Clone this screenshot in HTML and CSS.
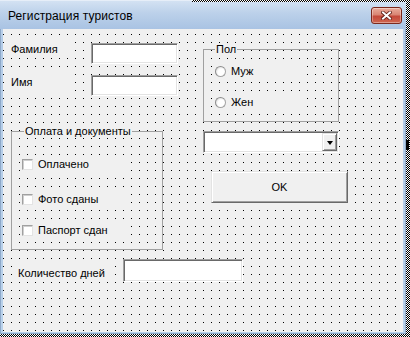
FILE: index.html
```html
<!doctype html>
<html lang="ru">
<head>
<meta charset="UTF-8">
<title>Регистрация туристов</title>
<link rel="stylesheet" href="styles.css">
</head>
<body>
	<div class="stage">
		<div class="window">
			<div class="titlebar">
				<span class="title">Регистрация туристов</span>
				<div class="close">
					<svg width="11" height="9" viewBox="0 0 11 9">
						<path d="M2 1.5L9 7.5M9 1.5L2 7.5" stroke="#5a1a12" stroke-width="3.6" stroke-linecap="square"/>
						<path d="M2 1.5L9 7.5M9 1.5L2 7.5" stroke="#fff" stroke-width="2" stroke-linecap="square"/>
					</svg>
				</div>
			</div>
			<div class="canvas">
				<!-- контролы формы, координаты как в дизайнере -->
				<div class="lbl lbl-surname">Фамилия</div>
				<div class="textbox tb-surname"></div>
				<div class="lbl lbl-name">Имя</div>
				<div class="textbox tb-name"></div>

				<div class="frame frame-sex">
					<span class="caption">Пол</span>
					<div class="opt opt-m"><span class="radio"></span>Муж</div>
					<div class="opt opt-f"><span class="radio"></span>Жен</div>
				</div>

				<div class="frame frame-docs">
					<span class="caption">Оплата и документы</span>
					<div class="opt chk-paid"><span class="check"></span>Оплачено</div>
					<div class="opt chk-photo"><span class="check"></span>Фото сданы</div>
					<div class="opt chk-pass"><span class="check"></span>Паспорт сдан</div>
				</div>

				<div class="combo">
					<div class="combo-text"></div>
					<div class="combo-btn"><span class="arrow"></span></div>
				</div>

				<div class="button btn-ok">OK</div>

				<div class="lbl lbl-days">Количество дней</div>
				<div class="textbox tb-days"></div>
			</div>
		</div>
		<div class="grip-top"></div>
		<div class="grip-right"></div>
	</div>
</body>
</html>
```
FILE: styles.css
```css
body{
	margin:0;
	background:#fff;
	font-family:"Liberation Sans", Arial, sans-serif;
	font-size:11px;
	color:#000;
}
.stage{
	position:relative;
	width:410px;
	height:337px;
	overflow:hidden;
	background:repeating-conic-gradient(#000 0 25%, #fff 0 50%) 0 0/2px 2px;
}
.window{
	width:406px;
	height:334px;
	display:flex;
	flex-direction:column;
	background:linear-gradient(#c9dbef, #b3cbe7 40px, #b9d1ea);
	box-shadow:inset 1px 0 #8ea9c9, inset -1px 0 #8ea9c9, inset 0 -1px #8ea9c9;
}
.titlebar{
	height:29px;
	display:flex;
	justify-content:space-between;
	align-items:flex-start;
	padding:0 4px 0 8px;
	background:linear-gradient(#d5e3f3, #bcd1ea 45%, #a9c3e3);
	box-shadow:inset 0 1px #e6eef8;
}
.title{
	font-size:12px;
	margin-top:9px;
	letter-spacing:0.1px;
}
.close{
	margin-top:7px;
	width:29px;
	height:15px;
	border:1px solid #7c2a1e;
	border-radius:3px;
	display:flex;
	align-items:center;
	justify-content:center;
	background:linear-gradient(#e9ac9c, #d98573 45%, #c4493a 55%, #cf6650);
	box-shadow:inset 0 0 0 1px rgba(255,255,255,0.35);
}
.close svg{
	display:block;
}
.canvas{
	flex:1;
	position:relative;
	margin:0 3px 2px 3px;
	background-color:#f0f0f0;
	background-image:conic-gradient(from 270deg at 1px 1px, #000 25%, transparent 0);
	background-size:8px 8px;
	background-position:0 5px;
}
/* надписи непрозрачные, точки сетки под ними не видны */
.lbl{
	position:absolute;
	line-height:13px;
	padding:2px 0;
	background:#f0f0f0;
	white-space:nowrap;
}
.lbl-surname{ left:8px; top:12px; width:62px; }
.lbl-name{ left:8px; top:45px; width:62px; }
.lbl-days{ left:15px; top:236px; width:94px; }

.textbox{
	position:absolute;
	box-sizing:border-box;
	background:#fff;
	border:1px solid;
	border-color:#a0a0a0 #fff #fff #a0a0a0;
	box-shadow:inset 1px 1px #696969, inset -1px -1px #e3e3e3;
}
.tb-surname{ left:88px; top:14px; width:87px; height:21px; }
.tb-name{ left:88px; top:46px; width:87px; height:21px; }
.tb-days{ left:120px; top:230px; width:120px; height:23px; }

.frame{
	position:absolute;
	box-sizing:border-box;
	border:1px solid #a0a0a0;
}
.frame-sex{ left:200px; top:20px; width:136px; height:73px; }
.frame-docs{ left:8px; top:102px; width:152px; height:119px; }
.caption{
	position:absolute;
	top:-7px;
	line-height:13px;
	padding:0 1px;
	background:#f0f0f0;
	white-space:nowrap;
}
.frame-sex .caption{ left:11px; }
.frame-docs .caption{ left:12px; }

.opt{
	position:absolute;
	display:flex;
	align-items:center;
	height:17px;
	line-height:13px;
	padding-left:2px;
	background:#f0f0f0;
	white-space:nowrap;
}
.opt-m{ left:9px; top:13px; gap:5px; width:86px; }
.opt-f{ left:9px; top:44px; gap:5px; width:86px; }
.chk-paid{ left:8px; top:24px; gap:5px; width:104px; }
.chk-photo{ left:8px; top:59px; gap:5px; width:104px; }
.chk-pass{ left:8px; top:90px; gap:5px; width:104px; }

.radio{
	width:9px;
	height:9px;
	border-radius:50%;
	border:1px solid #a2a2a2;
	border-top-color:#8d8d8d;
	border-left-color:#8d8d8d;
	background:radial-gradient(circle at 60% 60%, #fff 45%, #e6e6e6 70%, #d4d4d4);
}
.check{
	box-sizing:border-box;
	width:11px;
	height:11px;
	background:#fff;
	border:1px solid;
	border-color:#a0a0a0 #e3e3e3 #e3e3e3 #a0a0a0;
	box-shadow:inset 1px 1px #cfcfcf;
}

.combo{
	position:absolute;
	left:200px;
	top:102px;
	width:136px;
	height:22px;
	box-sizing:border-box;
	display:flex;
	padding:2px;
	background:#fff;
	border:1px solid;
	border-color:#a0a0a0 #fff #fff #a0a0a0;
	box-shadow:inset 1px 1px #696969, inset -1px -1px #e3e3e3;
}
.combo-text{
	flex:1;
}
.combo-btn{
	width:15px;
	box-sizing:border-box;
	display:flex;
	align-items:center;
	justify-content:center;
	background:#f0f0f0;
	border:1px solid;
	border-color:#e3e3e3 #696969 #696969 #e3e3e3;
	box-shadow:inset 1px 1px #fff, inset -1px -1px #a0a0a0;
	margin:-1px -1px -1px 0;
}
.arrow{
	width:0;
	height:0;
	border-left:3.5px solid transparent;
	border-right:3.5px solid transparent;
	border-top:4px solid #000;
	margin-top:1px;
}

.button{
	position:absolute;
	box-sizing:border-box;
	display:flex;
	align-items:center;
	justify-content:center;
	background:#f0f0f0;
	border:1px solid;
	border-color:#e3e3e3 #696969 #696969 #e3e3e3;
	box-shadow:inset 1px 1px #fff, inset -1px -1px #a0a0a0;
}
.btn-ok{ left:208px; top:142px; width:137px; height:32px; }

.grip-top{
	position:absolute;
	left:192px;
	top:0;
	width:218px;
	height:2px;
	background:repeating-conic-gradient(#000 0 25%, #fff 0 50%) 0 0/2px 2px;
}
.grip-right{
	position:absolute;
	left:406px;
	top:140px;
	width:3px;
	height:10px;
	background:#000;
}
```
